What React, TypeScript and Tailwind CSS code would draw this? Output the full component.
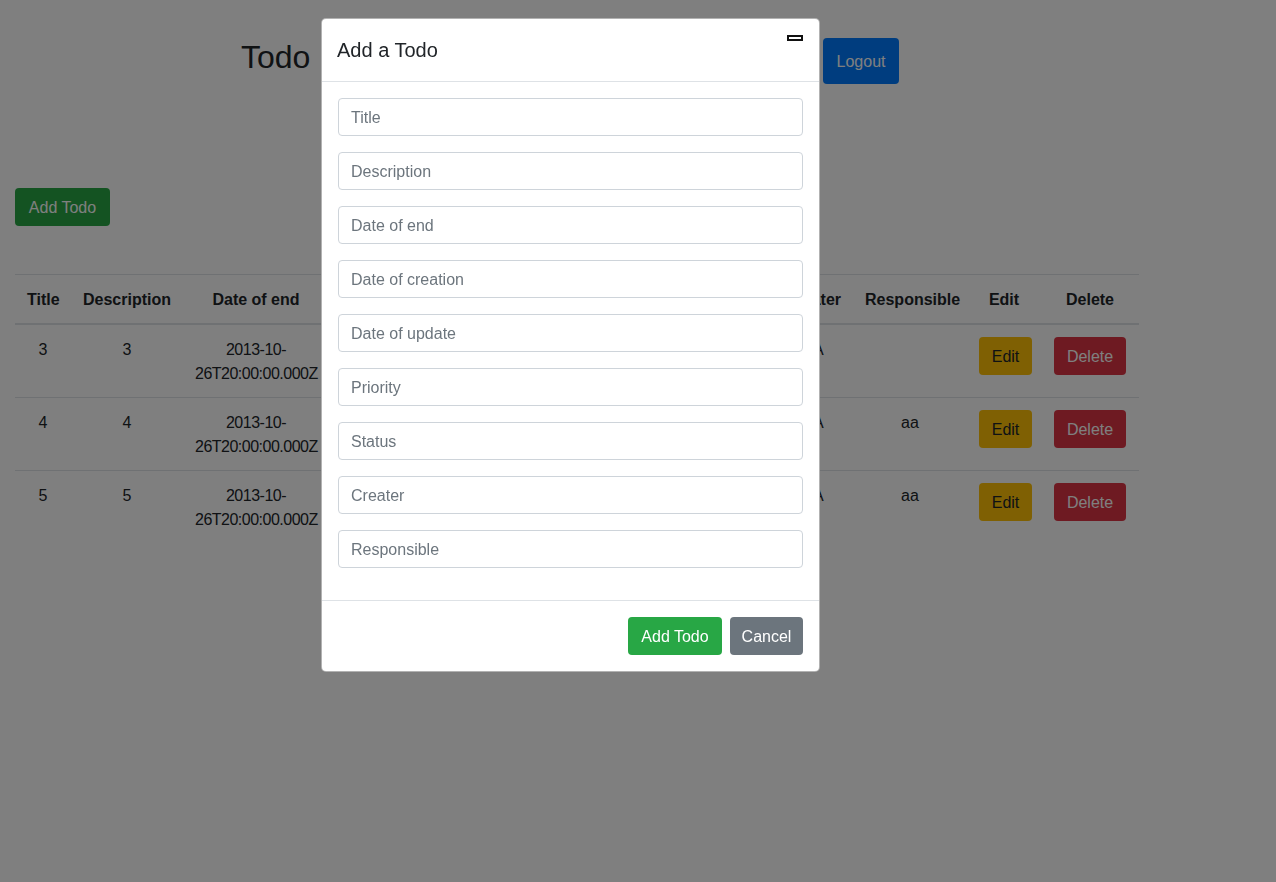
import React from 'react';

type Todo = {
  title: string;
  description: string;
  end: string;
  created: string;
  updated: string;
  priority: string;
  status: string;
  creater: string;
  responsible: string;
};

const todos: Todo[] = [
  { title: '3', description: '3', end: '2013-10-26T20:00:00.000Z', created: '2013-10-26T20:00:00.000Z', updated: '2013-10-26T20:00:00.000Z', priority: '1', status: 'new', creater: 'AA', responsible: '' },
  { title: '4', description: '4', end: '2013-10-26T20:00:00.000Z', created: '2013-10-26T20:00:00.000Z', updated: '2013-10-26T20:00:00.000Z', priority: '1', status: 'new', creater: 'AA', responsible: 'aa' },
  { title: '5', description: '5', end: '2013-10-26T20:00:00.000Z', created: '2013-10-26T20:00:00.000Z', updated: '2013-10-26T20:00:00.000Z', priority: '1', status: 'new', creater: 'AA', responsible: 'aa' },
];

const columns: { label: string; w: string }[] = [
  { label: 'Title', w: 'w-[56px]' },
  { label: 'Description', w: 'w-[112px]' },
  { label: 'Date of end', w: 'w-[146px]' },
  { label: 'Date of creation', w: 'w-[146px]' },
  { label: 'Date of update', w: 'w-[146px]' },
  { label: 'Priority', w: 'w-[82px]' },
  { label: 'Status', w: 'w-[70px]' },
  { label: 'Creater', w: 'w-[80px]' },
  { label: 'Responsible', w: 'w-[114px]' },
  { label: 'Edit', w: 'w-[74px]' },
  { label: 'Delete', w: 'w-[98px]' },
];

const fields = [
  'Title',
  'Description',
  'Date of end',
  'Date of creation',
  'Date of update',
  'Priority',
  'Status',
  'Creater',
  'Responsible',
];

// breaks the ISO date the way the browser did in the original
function DateCell({ v }: { v: string }) {
  return (
    <span className="tracking-[-0.5px]">
      {v.slice(0, 8)}
      <wbr />
      {v.slice(8)}
    </span>
  );
}

const td = 'border-t border-[#dee2e6] px-3 pt-[13px] pb-[11px] align-top leading-6';
const btn = 'h-[38px] rounded pt-px';

export default function App() {
  return (
    <div className="relative min-h-screen bg-white font-['Liberation_Sans',Arial,sans-serif] text-base text-[#212529]">
      {/* page under the modal */}
      <div className="flex items-start pl-[241px] pt-[38px]">
        <h1 className="w-[582px] text-[32px] leading-[38px] font-normal">Todo</h1>
        <button className="h-[46px] w-[76px] rounded bg-[#007bff] pt-px text-white">Logout</button>
      </div>

      <button className={`${btn} ml-[15px] mt-[104px] w-[95px] bg-[#28a745] text-white`}>
        Add Todo
      </button>

      <table className="ml-[15px] mt-[48px] w-[1124px] table-fixed border-collapse text-center">
        <thead>
          <tr>
            {columns.map((c) => (
              <th
                key={c.label}
                className={`${c.w} whitespace-nowrap border-t border-b-2 border-[#dee2e6] px-3 pt-[13px] pb-[11px] align-bottom font-bold leading-6`}
              >
                {c.label}
              </th>
            ))}
          </tr>
        </thead>
        <tbody>
          {todos.map((t) => (
            <tr key={t.title}>
              <td className={td}>{t.title}</td>
              <td className={td}>{t.description}</td>
              <td className={td}><DateCell v={t.end} /></td>
              <td className={td}><DateCell v={t.created} /></td>
              <td className={td}><DateCell v={t.updated} /></td>
              <td className={td}>{t.priority}</td>
              <td className={td}>{t.status}</td>
              <td className={td}>{t.creater}</td>
              <td className={td}>{t.responsible}</td>
              <td className={`${td} !pt-3 !pb-3`}>
                <button className={`${btn} w-[53px] bg-[#ffc107] text-[#212529]`}>Edit</button>
              </td>
              <td className={`${td} !pt-3 !pb-3`}>
                <button className={`${btn} w-[72px] bg-[#dc3545] text-white`}>Delete</button>
              </td>
            </tr>
          ))}
        </tbody>
      </table>

      {/* backdrop */}
      <div className="fixed inset-0 bg-black/50" />

      {/* modal */}
      <div className="absolute left-[321px] top-[18px] w-[499px] rounded-[5px] border border-black/30 bg-white">
        <div className="flex items-start justify-between border-b border-[#dee2e6] p-4">
          <h5 className="-ml-px pt-px text-[20px] leading-[29px] font-normal">Add a Todo</h5>
          <button className="h-[6px] w-4 border-2 border-[#111] bg-white" aria-label="close" />
        </div>

        <div className="p-4">
          {fields.map((f) => (
            <div key={f} className="mb-4">
              <input
                type="text"
                placeholder={f}
                className="block h-[38px] w-full rounded border border-[#ced4da] px-3 pt-[2px] leading-6 text-[#495057] placeholder:text-[#6c757d] focus:outline-none"
              />
            </div>
          ))}
        </div>

        <div className="flex items-center justify-end gap-2 border-t border-[#dee2e6] p-4">
          <button className={`${btn} w-[94px] bg-[#28a745] text-white`}>Add Todo</button>
          <button className={`${btn} w-[73px] bg-[#6c757d] text-white`}>Cancel</button>
        </div>
      </div>
    </div>
  );
}
